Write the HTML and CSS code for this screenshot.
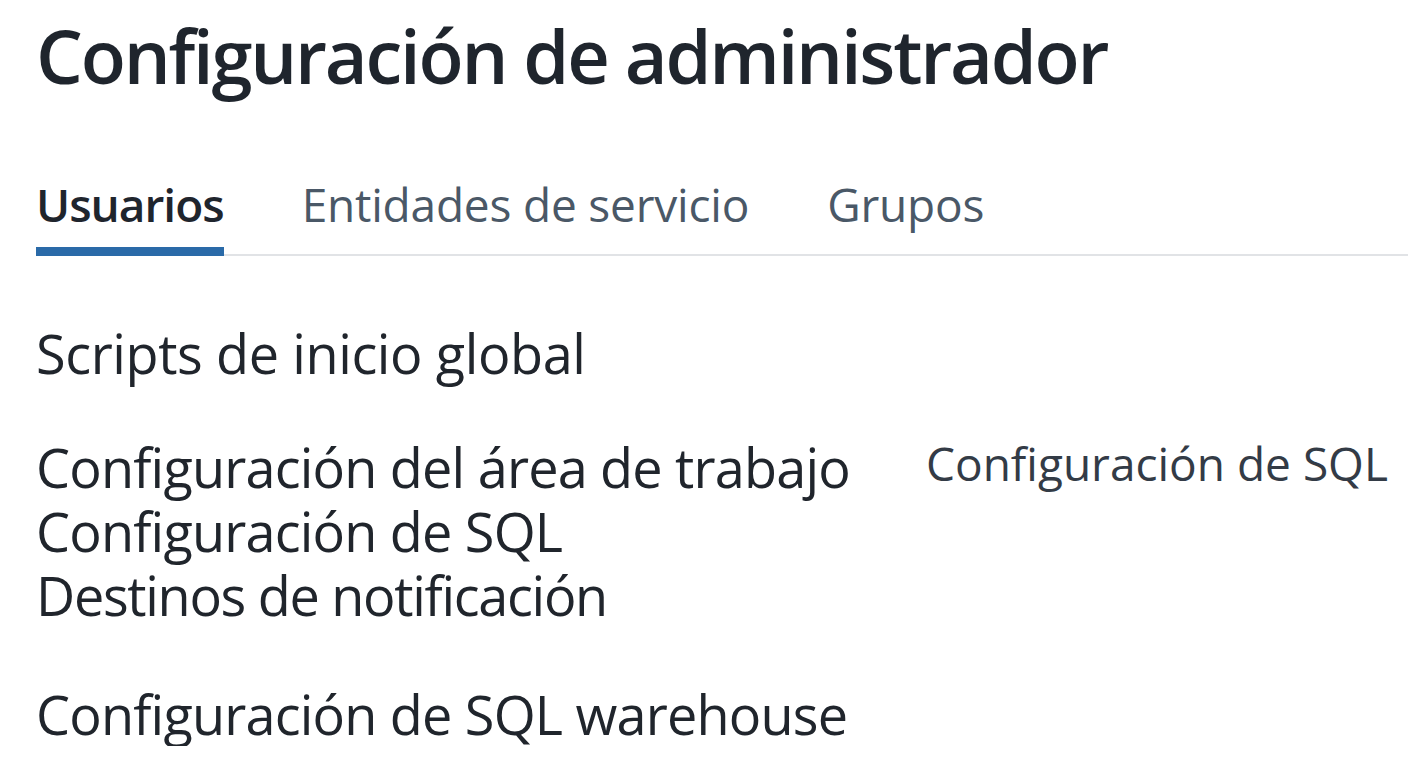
FILE: index.html
```html
<!DOCTYPE html>
<html lang="es">
<head>
<meta charset="utf-8">
<title>Configuración de administrador</title>
<link rel="stylesheet" href="styles.css">
</head>
<body>
<main class="page">
  <h1 class="title">Configuración de administrador</h1>
  <nav class="tabs">
    <a class="tab tab-active">Usuarios</a>
    <a class="tab">Entidades de servicio</a>
    <a class="tab">Grupos</a>
    <span class="tab-rest"></span>
  </nav>
  <section class="settings">
    <div class="item item-loose">Scripts de inicio global</div>
    <div class="group">
      <div class="group-col">
        <div class="line">Configuración del área de trabajo</div>
        <div class="line">Configuración de SQL</div>
        <div class="line line-tight">Destinos de notificación</div>
      </div>
      <div class="side">Configuración de SQL</div>
    </div>
    <div class="item item-last">Configuración de SQL warehouse</div>
  </section>
</main>
</body>
</html>
```

FILE: styles.css
```css
html, body {
  margin: 0;
  padding: 0;
  background: #ffffff;
}
body {
  font-family: "Open Sans", "Noto Sans", sans-serif;
  color: #20252c;
}
.page {
  padding: 0 0 0 36px;
}
.title {
  margin: 0;
  padding-top: 1px;
  font-size: 74px;
  font-weight: 600;
  line-height: 110px;
  letter-spacing: -2.2px;
  color: #1f252d;
}
.tabs {
  display: flex;
  align-items: flex-end;
  margin-top: 63px;
}
.tab {
  font-size: 46px;
  line-height: 60px;
  padding-bottom: 20px;
  color: #4a5867;
  border-bottom: 2px solid #e1e3e6;
  padding-right: 78px;
  letter-spacing: -0.2px;
}
.tab-active {
  font-weight: 600;
  letter-spacing: -1px;
  color: #1f252d;
  padding-right: 0;
  border-bottom: 9px solid #2a6aa8;
  padding-bottom: 13px;
  margin-right: 78px;
}
.tabs .tab-active + .tab {
  margin-left: -78px;
  padding-left: 78px;
}
.tab-rest {
  flex: 1;
  border-bottom: 2px solid #e1e3e6;
}
.settings {
  margin-top: 65px;
  font-size: 54px;
  color: #20252c;
  letter-spacing: -0.8px;
}
.item {
  line-height: 64px;
}
.item-loose {
  letter-spacing: -0.4px;
}
.group {
  display: flex;
  align-items: flex-start;
  gap: 76px;
  margin-top: 50px;
}
.line {
  line-height: 64px;
}
.line-tight {
  letter-spacing: -1.3px;
}
.side {
  font-size: 46px;
  line-height: 56px;
  color: #333b46;
  letter-spacing: 0;
}
.item-last {
  margin-top: 55px;
}
```
